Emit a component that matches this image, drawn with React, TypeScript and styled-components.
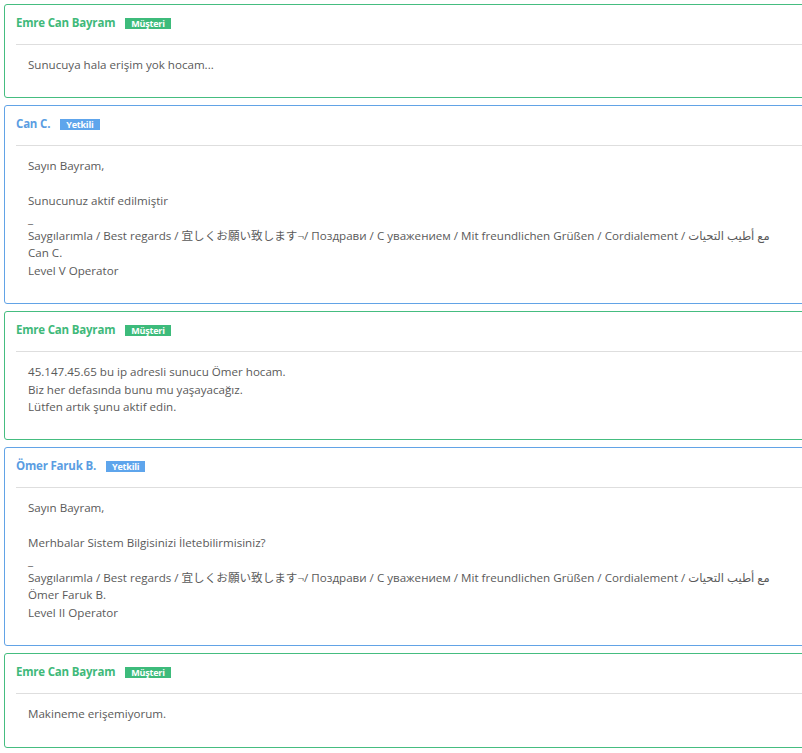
import styled, { createGlobalStyle } from "styled-components";

type Role = "customer" | "staff";

type Reply = {
    id: number;
    author: string;
    role: Role;
    lines: string[];
};

const signature =
    "Saygılarımla / Best regards / 宜しくお願い致します¬/ Поздрави / С уважением / Mit freundlichen Grüßen / Cordialement / مع أطيب التحيات";

const replies: Reply[] = [
    {
        id: 1,
        author: "Emre Can Bayram",
        role: "customer",
        lines: ["Sunucuya hala erişim yok hocam..."]
    },
    {
        id: 2,
        author: "Can C.",
        role: "staff",
        lines: ["Sayın Bayram,", "", "Sunucunuz aktif edilmiştir", "_", signature, "Can C.", "Level V Operator"]
    },
    {
        id: 3,
        author: "Emre Can Bayram",
        role: "customer",
        lines: [
            "45.147.45.65 bu ip adresli sunucu Ömer hocam.",
            "Biz her defasında bunu mu yaşayacağız.",
            "Lütfen artık şunu aktif edin."
        ]
    },
    {
        id: 4,
        author: "Ömer Faruk B.",
        role: "staff",
        lines: [
            "Sayın Bayram,",
            "",
            "Merhbalar Sistem Bilgisinizi İletebilirmisiniz?",
            "_",
            signature,
            "Ömer Faruk B.",
            "Level II Operator"
        ]
    },
    {
        id: 5,
        author: "Emre Can Bayram",
        role: "customer",
        lines: ["Makineme erişemiyorum."]
    }
];

const roleColors: Record<Role, { text: string; badge: string; border: string; label: string }> = {
    customer: { text: "#3fb97a", badge: "#3dbb7b", border: "#45bd80", label: "Müşteri" },
    staff: { text: "#5b9de2", badge: "#5ea5ec", border: "#62a3e6", label: "Yetkili" }
};

const GlobalStyle = createGlobalStyle`
    html, body {
        margin: 0;
        padding: 0;
        background: #fff;
        overflow: hidden;
    }
    body {
        font-family: "Open Sans", "Noto Sans CJK JP", "DejaVu Sans", sans-serif;
    }
`;

const Thread = styled.div`
    display: flex;
    flex-direction: column;
    row-gap: 7px;
    padding: 4px 0 0 4px;
    width: 840px;
`;

const ReplyCard = styled.div<{ $role: Role }>`
    border: 1px solid ${p => roleColors[p.$role].border};
    border-radius: 3px;
    background: #fff;
`;

const ReplyHeader = styled.div`
    display: flex;
    align-items: flex-start;
    column-gap: 10px;
    box-sizing: border-box;
    height: 39px;
    padding: 10px 11px 0;
`;

const AuthorName = styled.span<{ $role: Role }>`
    font-size: 11.5px;
    font-weight: 700;
    line-height: 15px;
    letter-spacing: -0.2px;
    color: ${p => roleColors[p.$role].text};
`;

const RoleBadge = styled.span<{ $role: Role }>`
    margin-top: 3px;
    padding: 0 6px;
    height: 11px;
    line-height: 11px;
    font-size: 9px;
    font-weight: 700;
    letter-spacing: -0.2px;
    color: #fff;
    background: ${p => roleColors[p.$role].badge};
`;

const Divider = styled.div`
    height: 1px;
    margin-left: 11px;
    background: #dedede;
`;

const ReplyBody = styled.div`
    padding: 11px 12px 24px 23px;
    font-size: 11.6px;
    line-height: 17.4px;
    color: #5a5a5a;
    white-space: nowrap;
`;

const Line = styled.div`
    min-height: 17.4px;
`;

export default function App() {
    return (
        <>
            <GlobalStyle />
            <Thread>
                {replies.map(reply => (
                    <ReplyCard key={reply.id} $role={reply.role}>
                        <ReplyHeader>
                            <AuthorName $role={reply.role}>{reply.author}</AuthorName>
                            <RoleBadge $role={reply.role}>{roleColors[reply.role].label}</RoleBadge>
                        </ReplyHeader>
                        <Divider />
                        <ReplyBody>
                            {reply.lines.map((line, i) => (
                                <Line key={i}>{line}</Line>
                            ))}
                        </ReplyBody>
                    </ReplyCard>
                ))}
            </Thread>
        </>
    );
}
